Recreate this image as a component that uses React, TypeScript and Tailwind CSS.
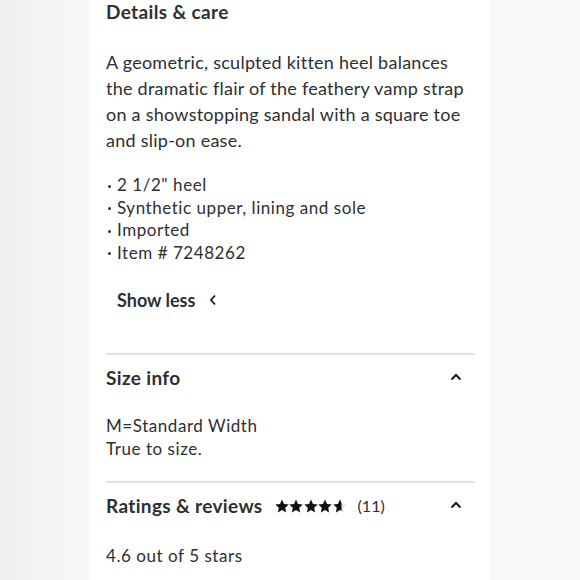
import React from "react";

const font = { fontFamily: "Lato, 'Open Sans', sans-serif" };

function ChevronUp() {
    return (
        <svg width="12" height="8" viewBox="0 0 12 8" fill="none" className="shrink-0">
            <path d="M1.5 6.5L6 2L10.5 6.5" stroke="#1a1a1a" strokeWidth="2" />
        </svg>
    );
}

function ChevronLeft() {
    return (
        <svg width="8" height="12" viewBox="0 0 8 12" fill="none" className="shrink-0">
            <path d="M6 1.5L2 6L6 10.5" stroke="#1a1a1a" strokeWidth="1.8" />
        </svg>
    );
}

const STAR = "M7 0.6l2 4.3 4.7 0.6-3.5 3.2 0.9 4.7L7 11.1 2.9 13.4l0.9-4.7L0.3 5.5l4.7-0.6z";

function Star({ half = false }: { half?: boolean }) {
    return (
        <svg width="14" height="14" viewBox="0 0 14 14" className="shrink-0">
            <defs>
                <clipPath id="halfclip">
                    <rect x="0" y="0" width="8.5" height="14" />
                </clipPath>
            </defs>
            {half ? (
                <>
                    <path d={STAR} fill="#e6e6e6" />
                    <path d={STAR} fill="#111" clipPath="url(#halfclip)" />
                </>
            ) : (
                <path d={STAR} fill="#111" />
            )}
        </svg>
    );
}

function Bullet({ children }: { children: React.ReactNode }) {
    return (
        <li className="flex items-center">
            <span className="w-[3px] h-[3px] rounded-full bg-[#2e2f32] ml-[2px] mr-[6px] mt-[2px]" />
            <span>{children}</span>
        </li>
    );
}

export default function App() {
    return (
        <div className="w-[580px] h-[580px] overflow-hidden flex text-[#2e2f32]" style={font}>
            <div className="w-[90px] h-full bg-gradient-to-r from-[#efefef] to-[#f8f8f8]" />

            <div className="w-[400px] h-full bg-white pl-4 pr-[15px] flex flex-col">
                <h2 className="text-[19px] leading-6 font-bold tracking-[0.35px]">Details &amp; care</h2>

                <p className="mt-[25px] text-[18px] leading-[26px] tracking-[0.25px]">
                    A geometric, sculpted kitten heel balances the dramatic flair of the feathery vamp strap
                    on a showstopping sandal with a square toe and slip-on ease.
                </p>

                <ul className="mt-[21px] text-[17px] leading-[22.5px] tracking-[0.55px]">
                    <Bullet>2 1/2" heel</Bullet>
                    <Bullet>Synthetic upper, lining and sole</Bullet>
                    <Bullet>Imported</Bullet>
                    <Bullet>Item # 7248262</Bullet>
                </ul>

                <button className="mt-6 ml-[11px] flex items-center gap-[14px] text-[18px] leading-6 font-bold self-start">
                    Show less
                    <ChevronLeft />
                </button>

                <div className="mt-[41px] h-[2px] bg-[#e3e4e5]" />

                <div className="mt-[11px] flex items-center justify-between pr-[13px]">
                    <h2 className="text-[19px] leading-6 font-bold tracking-[0.35px]">Size info</h2>
                    <div className="mt-[-3px]">
                        <ChevronUp />
                    </div>
                </div>

                <div className="mt-[25px] text-[17px] leading-[22.5px] tracking-[0.55px]">
                    <div>M=Standard Width</div>
                    <div>True to size.</div>
                </div>

                <div className="mt-[21px] h-[2px] bg-[#e3e4e5]" />

                <div className="mt-[11px] flex items-center justify-between pr-[13px]">
                    <div className="flex items-center">
                        <h2 className="text-[19px] leading-6 font-bold tracking-[0.35px]">Ratings &amp; reviews</h2>
                        <div className="ml-3 flex items-center gap-[0.5px]">
                            <Star />
                            <Star />
                            <Star />
                            <Star />
                            <Star half />
                        </div>
                        <span className="ml-[11px] text-[16px] leading-6">(11)</span>
                    </div>
                    <div className="mt-[-3px]">
                        <ChevronUp />
                    </div>
                </div>

                <div className="mt-[26px] text-[17px] leading-6 tracking-[0.55px]">4.6 out of 5 stars</div>
            </div>

            <div className="w-[90px] h-full bg-[#f8f8f8]" />
        </div>
    );
}
